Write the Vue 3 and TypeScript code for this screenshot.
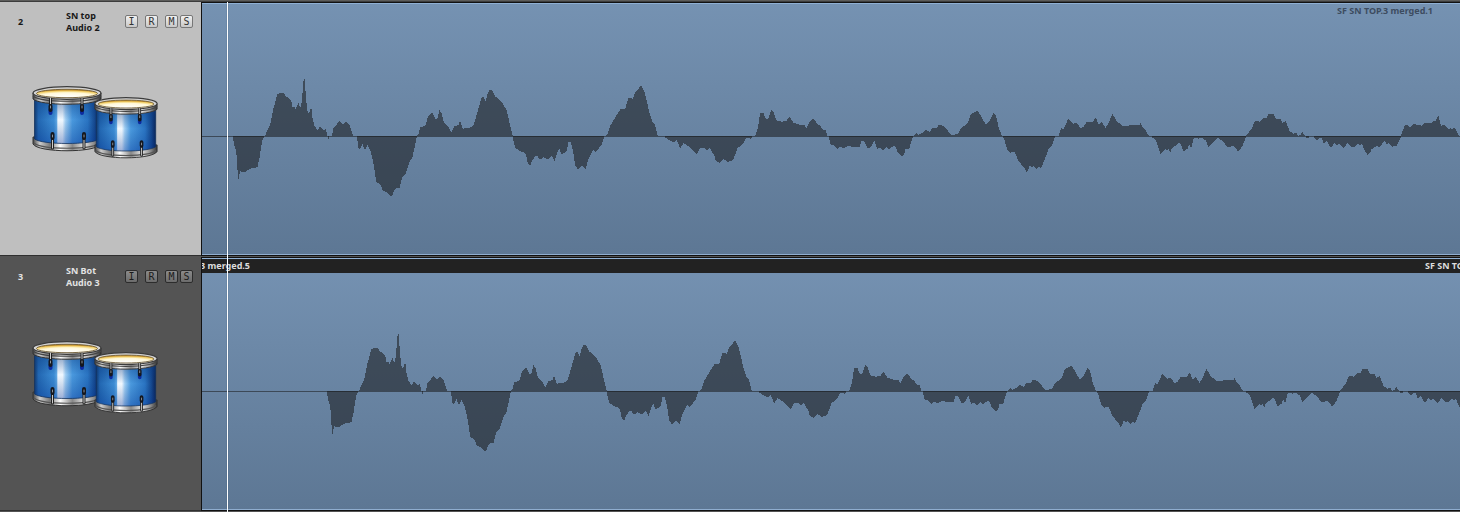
<script setup lang="ts">
import { reactive } from 'vue'

interface Track {
  number: number
  name: string
  channel: string
  region: string
  next: string
  selected: boolean
  offset: number
  flags: Record<string, boolean>
}

interface Segment {
  start: number
  base: number
  points: string
}

const flagLabels: Record<string, string> = {
  I: 'Input monitoring',
  R: 'Record enable',
  M: 'Mute',
  S: 'Solo',
}

const newFlags = () => ({ I: false, R: false, M: false, S: false })

const tracks = reactive<Track[]>([
  { number: 2, name: 'SN top', channel: 'Audio 2', region: 'SF SN TOP.3 merged.1', next: '', selected: true, offset: 0, flags: newFlags() },
  { number: 3, name: 'SN Bot', channel: 'Audio 3', region: 'SF SN TOP.3 merged.5', next: 'SF SN TOP.3 merged.6', selected: false, offset: 94, flags: newFlags() },
])

// Envelope breakpoints at three units per pixel: "position,level" against each segment's base level.
const segments: Segment[] = [
  {
    start: -2,
    base: 229,
    points:
      '99,229 102,250 108,268 111,295 114,362 117,345 121,330 125,335 135,335 148,325 155,322 172,320 178,295 184,255 188,235 192,229 195,228 205,205 212,190 216,165 222,140 228,120 231,103 240,101 246,98 252,100 258,113 265,113 274,124 277,143 284,141 287,149 292,137 295,129 299,142 303,142 306,120 310,65 313,51 316,88 319,124 322,153 327,162 331,147 335,147 338,180 344,200 353,212 359,201 370,210 373,213 377,208 382,228 385,237 388,229 396,228 400,205 412,192 418,184 427,194 440,186 447,193 459,228 471,230 475,262 479,267 487,250 495,270 502,252 511,268 519,300 529,365 540,370 548,388 563,397 572,407 577,405 583,388 590,380 598,385 606,350 617,340 630,300 637,290 645,255 650,229 655,225 660,204 676,198 684,170 697,158 708,180 712,178 718,151 725,160 732,190 745,200 754,219 762,200 775,196 780,183 788,207 806,205 820,198 830,165 845,112 850,112 857,124 862,103 870,90 876,92 885,110 898,120',
  },
  {
    start: 298,
    base: 229,
    points:
      '0,122 7,130 20,152 30,195 38,229 45,260 60,272 72,274 78,283 83,305 90,315 97,300 105,287 112,285 119,297 130,290 144,297 155,285 164,303 170,280 178,264 184,279 192,278 200,269 206,243 212,243 219,270 225,312 233,327 246,314 257,325 265,296 280,267 287,273 304,254 312,231 322,226 330,200 345,174 363,147 375,149 386,113 398,117 405,100 423,77 432,92 442,130 448,160 457,186 465,195 473,228 495,230 505,237 523,245 530,239 541,263 551,247 572,262 590,282 600,261 612,261 621,270 630,261 637,278 642,281 647,299 658,307 669,295 685,304 700,297 712,263 730,248 738,231 748,231 753,235 758,229 766,227 774,205 780,162 790,158 798,180 805,176 815,149 820,156 830,183 846,186 860,183 868,170 880,189 896,194',
  },
  {
    start: 598,
    base: 169,
    points:
      '0,135 12,135 20,145 31,123 42,117 52,134 59,136 68,150 77,151 82,169 87,171 92,193 100,192 112,205 121,198 132,203 143,195 162,200 178,200 185,178 194,184 203,202 212,200 223,180 231,204 242,201 249,209 260,199 266,205 285,194 292,212 307,228 312,222 317,204 327,206 337,171 344,166 349,159 356,165 368,160 376,150 389,157 398,144 411,144 417,135 432,139 453,165 474,164 483,145 504,130 512,103 526,97 534,93 544,112 553,127 557,135 570,122 580,101 588,107 597,148 606,168 612,173 622,209 632,216 644,213 656,242 672,260 680,276 689,256 696,260 701,255 709,264 717,258 722,264 734,237 746,205 755,197 764,171 776,168 784,145 790,150 805,117 821,132 830,130 841,144 850,143 860,126 878,126 887,114 897,136 906,126 916,145 927,128 937,102 949,123 967,139 986,138',
  },
  {
    start: 928,
    base: 169,
    points:
      '0,135 28,136 32,129 36,139 46,151 56,168 69,171 78,181 91,219 106,204 111,210 115,204 121,216 126,202 149,186 161,211 173,204 177,192 184,201 191,172 199,171 204,174 216,171 228,180 235,199 247,189 255,178 262,171 277,180 294,201 310,195 325,213 338,195 349,166 363,150 376,123 389,126 400,114 411,115 415,102 432,104 437,117 450,117 458,130 467,123 478,153 490,162 498,159 505,168 512,166 517,156 524,167 534,174 540,169 552,170 561,181 567,171 574,171 582,189 590,181 603,202 614,186 620,195 628,189 641,204 653,186 664,198 671,200 683,189 690,194 695,189 702,204 712,223 721,215 725,205 743,195 748,200 764,180 769,190 777,188 785,198 800,195 812,171 817,157 824,136 834,137 840,145 850,133 875,138 885,129 905,129 910,123 917,123 925,107 933,138 943,136 951,142 957,151 962,143 967,150 972,143 979,153 987,168',
  },
]

const breakpoints: [number, number][] = segments.flatMap((segment) =>
  segment.points.split(' ').map((pair): [number, number] => {
    const [x, y] = pair.split(',').map(Number)
    return [segment.start + x / 3, (y - segment.base) / 3]
  }),
)

// One column per pixel, sampled at its centre, so the waveform keeps its stepped outline.
function buildWaveform(): string {
  let path = 'M0 0'
  let index = 0
  const end = Math.floor(breakpoints[breakpoints.length - 1][0])
  for (let x = 0; x < end; x++) {
    const centre = x + 0.5
    while (index < breakpoints.length - 2 && breakpoints[index + 1][0] <= centre) index++
    const [x0, y0] = breakpoints[index]
    const [x1, y1] = breakpoints[index + 1]
    const ratio = Math.min(1, Math.max(0, (centre - x0) / (x1 - x0)))
    const level = Math.round(y0 + (y1 - y0) * ratio)
    path += `V${level > 0 ? level + 1 : level}H${x + 1}`
  }
  return path + 'V0Z'
}

const waveform = buildWaveform()
</script>

<template>
  <main class="arrange">
    <svg class="defs" width="0" height="0" aria-hidden="true">
      <defs>
        <linearGradient id="shell" x1="0" x2="1" y1="0" y2="0">
          <stop offset="0" stop-color="#12396c" />
          <stop offset=".06" stop-color="#2267b2" />
          <stop offset=".3" stop-color="#3c8cd4" />
          <stop offset=".34" stop-color="#5ea6e2" />
          <stop offset=".36" stop-color="#f4faff" />
          <stop offset=".43" stop-color="#f0f8ff" />
          <stop offset=".48" stop-color="#9fcdf2" />
          <stop offset=".58" stop-color="#4a99de" />
          <stop offset=".82" stop-color="#2a74c2" />
          <stop offset=".93" stop-color="#14468c" />
          <stop offset="1" stop-color="#0a2458" />
        </linearGradient>
        <linearGradient id="shade" x1="0" x2="0" y1="0" y2="1">
          <stop offset=".15" stop-color="#0a3a80" stop-opacity=".4" />
          <stop offset=".5" stop-color="#0a3a80" stop-opacity="0" />
          <stop offset="1" stop-color="#002a90" stop-opacity=".35" />
        </linearGradient>
        <linearGradient id="chrome" x1="0" x2="1" y1="0" y2="0">
          <stop offset="0" stop-color="#444" />
          <stop offset=".1" stop-color="#ccc" />
          <stop offset=".25" stop-color="#777" />
          <stop offset=".4" stop-color="#fff" />
          <stop offset=".58" stop-color="#888" />
          <stop offset=".75" stop-color="#e4e4e4" />
          <stop offset=".9" stop-color="#888" />
          <stop offset="1" stop-color="#333" />
        </linearGradient>
        <radialGradient id="skin" cx=".5" cy=".85" r=".75">
          <stop offset="0" stop-color="#ffffff" />
          <stop offset=".6" stop-color="#fff8d8" />
          <stop offset=".85" stop-color="#f2cf68" />
          <stop offset="1" stop-color="#c8922a" />
        </radialGradient>
      </defs>
      <symbol id="drum" viewBox="0 0 70 66" preserveAspectRatio="none">
        <path d="M1 51v7c5 9 63 9 68 0v-7z" fill="url(#chrome)" stroke="#333" stroke-width="1" />
        <path d="M2 57c8 7 58 7 66 0" fill="none" stroke="#555" stroke-width="1.200" />
        <path d="M2.500 10V53c8 6 57 6 65 0V10z" fill="url(#shell)" />
        <path d="M2.500 10V53c8 6 57 6 65 0V10z" fill="url(#shade)" stroke="#15345e" stroke-width=".8" />
        <path d="M1 7v6c7 7 61 7 68 0V7z" fill="url(#chrome)" stroke="#333" stroke-width="1" />
        <path d="M1 10c8 7 60 7 68 0" fill="none" stroke="#444" stroke-width="1.200" />
        <ellipse cx="35" cy="7" rx="34" ry="6.300" fill="#d4d4d4" stroke="#3c3c3c" stroke-width="1.200" />
        <ellipse cx="35" cy="7.500" rx="30.500" ry="4.200" fill="url(#skin)" stroke="#6d5a34" stroke-width=".9" />
        <g stroke-linecap="round">
          <path d="M18.500 24v3M50 24v3" stroke="#0b2ba0" stroke-width="4" />
          <path d="M18.500 13v10M50 13v10M20.500 50v12M52 50v12" stroke="#222" stroke-width="3" />
          <path d="M18.500 12v7M50 12v7M20.500 54v8M52 54v8" stroke="#ccc" stroke-width="1" />
          <path d="M18.500 20v4M50 20v4M20.500 48v4M52 48v4" stroke="#15171d" stroke-width="4" />
          <path d="M18.500 20v2M50 20v2M20.500 49v2M52 49v2" stroke="#8c929b" stroke-width="1" />
        </g>
      </symbol>
    </svg>

    <section
      v-for="track in tracks"
      :key="track.number"
      class="track"
      :class="{ selected: track.selected }"
      :aria-label="track.name"
    >
      <header class="strip">
        <div class="info">
          <span class="number">{{ track.number }}</span>
          <div class="names">
            <div>{{ track.name }}</div>
            <div>{{ track.channel }}</div>
          </div>
          <div class="flags">
            <button
              v-for="(label, flag) in flagLabels"
              :key="flag"
              type="button"
              :aria-label="label"
              :aria-pressed="track.flags[flag]"
              @click="track.flags[flag] = !track.flags[flag]"
            >{{ flag }}</button>
          </div>
        </div>
        <svg class="drums" width="128" height="74" viewBox="0 0 128 74" role="img" aria-label="Drums">
          <use href="#drum" x="0" y="0" width="70" height="66" />
          <use href="#drum" x="62" y="11" width="64" height="62" />
        </svg>
      </header>
      <div class="lane">
        <div class="region-title">
          <span class="title">{{ track.region }}</span>
          <span v-if="track.next" class="title next">{{ track.next }}</span>
        </div>
        <svg class="wave" height="237" aria-hidden="true" shape-rendering="crispEdges">
          <rect class="ink" x="0" y="118" width="100%" height="1" />
          <path class="ink" :d="waveform" :transform="`translate(${track.offset} 118)`" />
        </svg>
      </div>
    </section>
    <div class="playhead"></div>
  </main>
</template>

<style>
body {
  margin: 0;
  background: #545454;
}
</style>

<style scoped>
.arrange {
  position: relative;
  overflow: hidden;
  border-top: 1px solid #5c5c5a;
  padding-top: 1px;
  background: #3c3c3c;
  font: bold 9px/12px "Lucida Grande", "Noto Sans", "Open Sans", sans-serif;
}

.defs {
  display: block;
}

.track {
  display: grid;
  grid-template-columns: 201px minmax(0, 1fr);
  background: #545454;
  color: #e2e2e2;
}

.strip {
  margin-bottom: 1px;
  border-bottom: 1px solid #303030;
}

.selected .strip {
  background: #bfbfbf;
  color: #181818;
}

.info {
  display: flex;
  align-items: center;
  height: 24px;
  padding: 8px 8px 0 18px;
}

.number {
  width: 48px;
}

.names {
  width: 59px;
}

.flags {
  display: flex;
  gap: 2px;
  margin-bottom: 2px;
}

.flags button {
  width: 13px;
  height: 13px;
  padding: 0;
  border: 1px solid #2c2c2c;
  border-radius: 2px;
  background: linear-gradient(#8a8a8a, #6c6c6c);
  color: #1c1c1c;
  font: 10px/11px "DejaVu Sans Mono", monospace;
  text-align: center;
}

.flags button:nth-child(-n+2) {
  margin-right: 5px;
}

.selected .flags button {
  border-color: #777;
  background: linear-gradient(#f0f0f0, #c8c8c8);
  color: #333;
}

.drums {
  display: block;
  margin: 52px 0 0 32px;
}

.lane {
  min-width: 0;
  margin-bottom: 1px;
  border: solid #111;
  border-width: 1px 0 1px 1px;
  background: linear-gradient(#7592b2, #5d7794);
  box-shadow: inset 0 1px #8fb0d4, inset 0 -1px #8fadcf;
}

.region-title {
  display: flex;
  justify-content: flex-end;
  height: 15px;
  line-height: 15px;
  padding-right: 27px;
  color: #3d4c60;
  white-space: nowrap;
}

.track:not(.selected) .region-title {
  justify-content: space-between;
  margin-top: 1px;
  height: 14px;
  line-height: 14px;
  padding: 0;
  background: #222;
  color: #ddd;
}

.track:not(.selected) .title {
  display: flex;
  justify-content: flex-end;
  width: 48px;
  overflow: hidden;
}

.track:not(.selected) .next {
  justify-content: flex-start;
  width: 35px;
}

.wave {
  display: block;
  width: 100%;
}

.ink {
  fill: rgba(20, 20, 20, 0.53);
}

.playhead {
  position: absolute;
  top: 1px;
  bottom: 0;
  left: 227px;
  width: 1px;
  background: #fff;
  box-shadow: 0 0 1px #24405f;
}
</style>
